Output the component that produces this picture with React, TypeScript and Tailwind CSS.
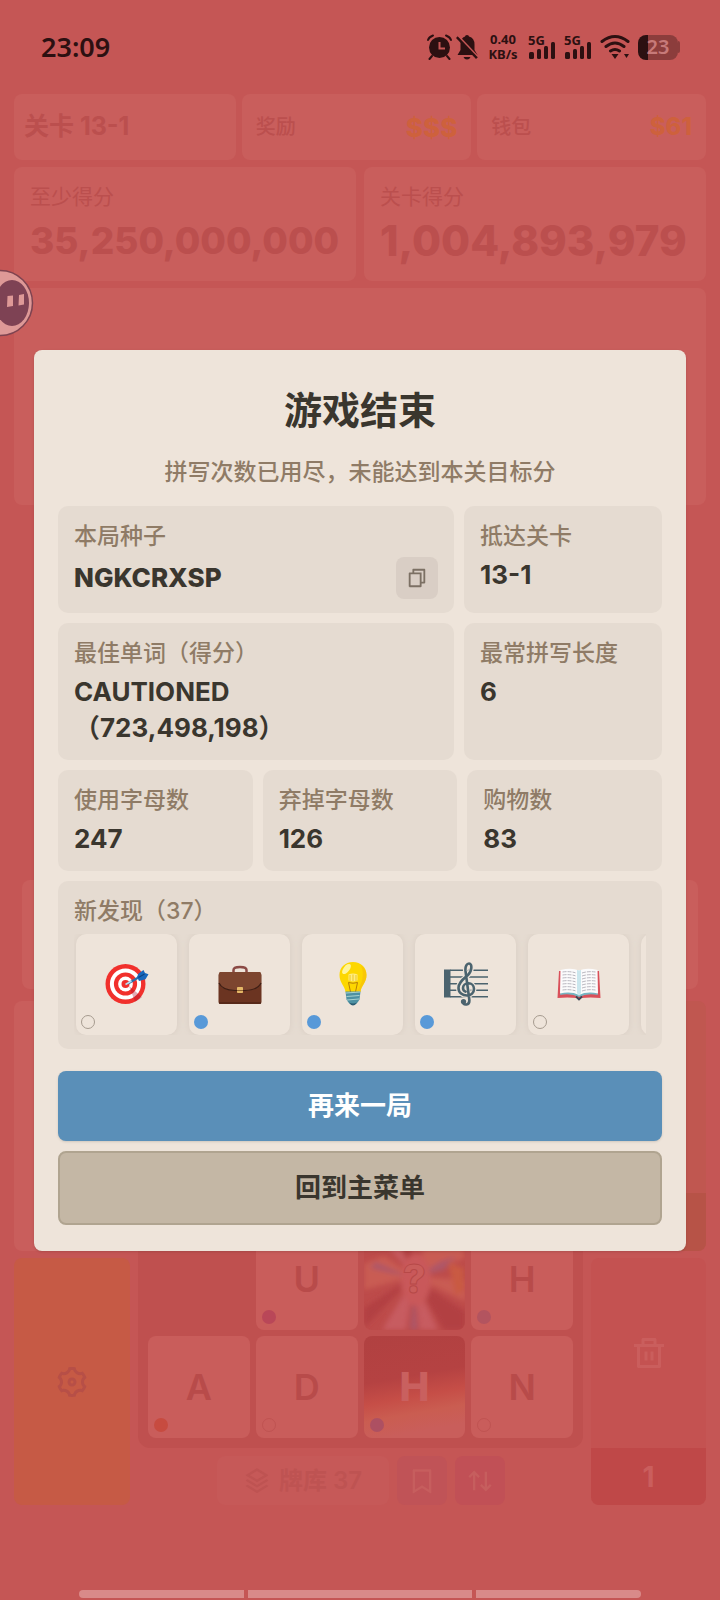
import type { ReactNode } from 'react'
import {
    RiArrowUpDownLine,
    RiBookmarkLine,
    RiDeleteBinLine,
    RiFileCopyLine,
    RiSettings3Line,
    RiStackLine,
} from 'react-icons/ri'

interface Discovery {
    name: string;
    owned: boolean;
    art: ReactNode;
}

interface Letter {
    char: string;
    dot: string;
    look?: 'burst' | 'flame';
}

const TargetArt = () => (
    <svg viewBox="0 0 44 44" className="size-11" aria-hidden="true">
        <circle cx="20.5" cy="22" r="20" fill="#f1302c" />
        <circle cx="20.5" cy="22" r="15.6" fill="#fff" />
        <circle cx="20.5" cy="22" r="11.6" fill="#f1302c" />
        <circle cx="20.5" cy="22" r="7.4" fill="#fff" />
        <circle cx="20.5" cy="22" r="4" fill="#f1302c" />
        <path d="M24 24 37 35a20 20 0 0 1-7 4.500Z" fill="#a5122c" opacity=".35" />
        <path d="M23 21.500 36 14" stroke="#2d6fa8" strokeWidth="2.200" />
        <path d="m20.500 22.500 6-3.500" stroke="#b8dff0" strokeWidth="1.600" />
        <path d="m32 15 1.500-3.500 5-3.500 1.500 3 3.500 1.200-3 5-6.500 1.800Z" fill="#1767bd" />
        <path d="m33.500 15.500 6-3.500" stroke="#0d4381" strokeWidth="1.200" />
    </svg>
)

const BriefcaseArt = () => (
    <svg viewBox="0 0 44 44" className="size-11" aria-hidden="true">
        <path d="M15.500 10V8Q15.500 5 22 5t6.500 3v2" fill="none" stroke="#8b4a45" strokeWidth="2.500" />
        <rect x="0.500" y="11" width="43" height="31" rx="2" fill="#6b3421" />
        <path d="M2 10h40q1 0 1 2v10q-3 6-16 7H17Q4 28 1 22V12q0-2 1-2Z" fill="#7d452f" />
        <path d="M1 21q3 7 16 7.500h10Q40 28 43 21" fill="none" stroke="#3d1e15" strokeWidth="1.200" />
        <path d="M1 41h42" stroke="#502617" strokeWidth="1.500" />
        <rect x="19" y="25" width="6" height="6" rx=".8" fill="#e5b867" />
        <path d="M19 28.500h6" stroke="#8f6231" />
    </svg>
)

const BulbArt = () => (
    <svg viewBox="0 0 44 44" className="size-11" aria-hidden="true">
        <path d="M22 0c-8 0-13.500 5.500-13.500 13 0 8 5 10 6 17h15c1-7 6-9 6-17C35.500 5.500 30 0 22 0Z" fill="#fdd700" />
        <path d="M30 3.500c4 9 1 18-4 26h3.500c1-7 6-9 6-16.500C35.500 9 33.500 5.500 30 3.500Z" fill="#f6bd0c" opacity=".6" />
        <ellipse cx="15.500" cy="7" rx="3" ry="6" transform="rotate(38 15.500 7)" fill="#fff59a" />
        <path d="M17.500 12.500q4.500-2 9 0v6q-4.500 2-9 0Z" fill="#fff3a0" opacity=".8" />
        <path d="M19 13v6M22 12.500v6.500M25 13v6" stroke="#e9bb0a" strokeWidth=".8" />
        <path d="m19.500 30-2-9.500q4.500 1.500 9 0l-2 9.500" fill="none" stroke="#b77e09" />
        <path d="M14.500 29.500h15l-1 8q-3 5.500-6.500 5.500t-6.500-5.500Z" fill="#4d91a3" />
        <path d="m15 31 14-1M15.500 34.500l13-1M16 38l12-1" stroke="#a9d2cf" strokeWidth="1.200" />
        <path d="M18 40.500q4 2 8 0-2 3-4 3t-4-3Z" fill="#2a5c72" />
    </svg>
)

const clef =
    'M18.500 39.500c1 4.500 7.500 4 6.800-2L21.500 9C21 4 23 1.500 25 1.500c3.500 0 3 8-1 11.500-5 4.500-9.500 7.500-9.500 13 0 4.800 4 7.500 8.500 7.500 4.200 0 7-3 7-6.500 0-3.300-2.500-5.700-5.500-5.700-3.200 0-5.500 2.200-5.500 4.700 0 1.700 1 3 2.500 3.600'

const ScoreArt = () => (
    <svg viewBox="0 0 44 44" className="size-11" aria-hidden="true">
        <path d="M0 7.500h6.500v28H0z" fill="#4b636e" />
        <path d="M6 8.300h38M6 15h38M6 21.700h38M6 28.300h38M6 34.700h38" stroke="#4b636e" strokeWidth="1.500" />
        <path d={clef} fill="none" stroke="#eee4da" strokeWidth="5" />
        <path d={clef} fill="none" stroke="#4b636e" strokeWidth="2.600" strokeLinecap="round" />
        <circle cx="19.500" cy="39.500" r="2.600" fill="#4b636e" />
    </svg>
)

const bookLines = [11, 14, 17, 20, 23, 26, 29]

const BookArt = () => (
    <svg viewBox="0 0 44 44" className="size-11" aria-hidden="true">
        <path d="m2 9-1.500 27q10-1 19 0l2.500 1.500 2.500-1.500q9-1 19 0L42 9Z" fill="#d9505a" />
        <path d="M3 33q11-2 19 2 8-4 19-2l-1-3H4Z" fill="#76b4c1" />
        <path d="M3.500 8Q15 5.500 22 8.500V33Q14 29 3 31.500Z" fill="#fbfbfc" />
        <path d="M40.500 8Q29 5.500 22 8.500V33q8-4 19-1.500Z" fill="#fbfbfc" />
        <path d="M20 8q2 0 2 1 0-1 2-1v23l-2 3-2-3Z" fill="#cae6ed" />
        {bookLines.map((y) => (
            <path key={y} d={`M5.500 ${y - 1}q7-1 13 .8M25 ${y}q6-2 13.500-1`} fill="none" stroke="#a7a5ae" strokeWidth=".8" strokeDasharray="4 1" />
        ))}
        <path d="m19 34.500 3 3 3-3" fill="none" stroke="#3e4555" strokeWidth="1.800" />
    </svg>
)

const discoveries: Discovery[] = [
    { name: '靶心', owned: false, art: <TargetArt /> },
    { name: '公文包', owned: true, art: <BriefcaseArt /> },
    { name: '灯泡', owned: true, art: <BulbArt /> },
    { name: '乐谱', owned: true, art: <ScoreArt /> },
    { name: '书本', owned: false, art: <BookArt /> },
]

const letters: (Letter | null)[] = [
    null,
    { char: 'U', dot: 'bg-[#b94758]' },
    { char: '?', dot: '', look: 'burst' },
    { char: 'H', dot: 'bg-[#b3545f]' },
    { char: 'A', dot: 'bg-[#c74b40]' },
    { char: 'D', dot: 'border border-[#bf5352]' },
    { char: 'H', dot: 'bg-[#ad5062]', look: 'flame' },
    { char: 'N', dot: 'border border-[#bf5352]' },
]

const Signal = () => (
    <div className="flex h-6 w-7 flex-col justify-between">
        <span className="text-[13px] leading-[10px] font-bold">5G</span>
        <svg viewBox="0 0 28 17" className="-mt-1 h-[17px] w-7 fill-current" aria-hidden="true">
            <rect x="1" y="10" width="5" height="7" rx="1.500" />
            <rect x="9" y="7" width="4" height="10" rx="1.500" />
            <rect x="16" y="4" width="4" height="13" rx="1.500" />
            <rect x="23" y="0" width="4" height="17" rx="1.500" />
        </svg>
    </div>
)

const StatusBar = () => (
    <header className="flex h-[94px] shrink-0 items-center justify-between pr-[26px] pl-[27px] font-['Noto_Sans'] text-[#2c1011]">
        <time className="text-[27px] leading-9 font-semibold">23:09</time>
        <div className="flex items-center gap-2">
            <div className="flex items-center gap-1">
                <svg viewBox="0 0 25 26" className="h-[26px] w-[25px]" fill="none" stroke="currentColor" strokeWidth="2" aria-hidden="true">
                    <path d="M1 6q1-3 5-4.500M24 6q-1-3-5-4.500M5 22l-2.500 3M20 22l2.500 3" strokeLinecap="round" />
                    <circle cx="12.500" cy="13.500" r="10.500" fill="currentColor" stroke="none" />
                    <path d="M12.500 8v6.500H18" stroke="#c55655" />
                </svg>
                <svg viewBox="0 0 22 26" className="h-[26px] w-[22px] fill-current" aria-hidden="true">
                    <path d="M11 1q2 0 2 1.500 5.500 1.500 5.500 8V16l3 5h-20l3-5v-5.500Q4.500 4 9 2.500 9 1 11 1ZM7.500 23h7q-1 2.500-3.500 2.500T7.500 23Z" />
                    <path d="m0 4 2-2 20 21-2 2Z" />
                    <path d="m2 1.500 20 21" stroke="#c55655" strokeWidth="1.500" />
                </svg>
            </div>
            <div className="w-[34px] text-center text-[13px] leading-[15px] font-bold">
                <div>0.40</div>
                <div>KB/s</div>
            </div>
            <Signal />
            <Signal />
            <svg viewBox="0 0 30 26" className="h-[26px] w-[30px]" fill="none" stroke="currentColor" strokeWidth="3" strokeLinecap="round" aria-hidden="true">
                <path d="M2 7.500q13-10 26 0M6 12.500q9-7 18 0M10.500 17q4.500-3 9 0" />
                <path d="M11.500 20h7L15 25ZM24 20h5l-2.500 4Z" fill="currentColor" stroke="none" />
            </svg>
            <div className="flex items-center">
                <div className="flex h-[25px] w-10 items-center justify-center overflow-hidden rounded-lg bg-linear-to-r from-[#2c1011] from-25% to-[#8c3d3c] to-25% text-xl leading-6 font-semibold text-[#c77a79]">
                    23
                </div>
                <div className="h-3 w-[2px] rounded-r bg-[#8c3d3c]" />
            </div>
        </div>
    </header>
)

const Scoreboard = () => (
    <section className="flex shrink-0 flex-col gap-[7px] text-[#bb4f4e]">
        <div className="grid h-[66px] grid-cols-[222fr_230fr_229fr] gap-[6px] [&>div]:flex [&>div]:items-center [&>div]:justify-between [&>div]:rounded-lg [&>div]:bg-[#c95e5c]">
            <div className="px-[10px] text-[25px] font-bold">关卡 13-1</div>
            <div className="px-[14px]">
                <span className="text-xl font-medium">奖励</span>
                <span className="text-[26px] font-extrabold text-[#ce613c]">$$$</span>
            </div>
            <div className="px-[14px]">
                <span className="text-xl font-medium">钱包</span>
                <span className="text-2xl font-extrabold text-[#ce613c]">$61</span>
            </div>
        </div>
        <div className="grid h-[114px] grid-cols-2 gap-2 [&>div]:rounded-lg [&>div]:bg-[#c95e5c] [&>div]:px-4 [&>div]:pt-4">
            <div>
                <div className="text-[21px] leading-7">至少得分</div>
                <div className="text-[37px] leading-[60px] font-extrabold">35,250,000,000</div>
            </div>
            <div>
                <div className="text-[21px] leading-7">关卡得分</div>
                <div className="text-[42px] leading-[60px] font-extrabold">1,004,893,979</div>
            </div>
        </div>
        <div className="h-[217px] rounded-lg bg-[#c95e5c]" />
    </section>
)

const tileLooks = {
    plain: 'bg-[#c95d5b] text-[#b84b4a] font-semibold text-[36px]',
    burst: 'bg-[#bd4b4a] text-[#c95d5b] font-extrabold text-[40px] [-webkit-text-stroke:1px_#b74948]',
    flame: 'bg-[linear-gradient(170deg,#b14141_0%,#b54242_40%,#c64e47_58%,#ca5d51_72%,#c95e5b_88%)] text-[#c9605f] font-extrabold text-[40px]',
}

const Burst = () => (
    <svg viewBox="0 0 102 102" className="absolute inset-0 size-full" aria-hidden="true">
        <filter id="soft">
            <feGaussianBlur stdDeviation="2.500" />
        </filter>
        <g filter="url(#soft)">
            <path d="M50 48 0 62v-26l20-8ZM50 48 68 0h24l10 30ZM50 48l52 4v22Z" fill="#c95c52" />
            <path d="m50 50-32 52h24ZM50 50l6 52h18ZM50 48 8 0h18Z" fill="#c75b60" />
            <path d="m50 48-50 32v20ZM50 50l52 34v18H80ZM50 48 30 0h16Z" fill="#b24043" />
            <path d="m50 60-4 42h8ZM50 50 76 34l16-6-12 14ZM48 50 12 34l-6 6Z" fill="#ae5768" />
            <path d="m84 34 16 6v22l-8 6Z" fill="#c95a42" />
            <ellipse cx="52" cy="52" rx="15" ry="26" fill="#c9595a" />
        </g>
    </svg>
)

const LetterTile = ({ letter }: { letter: Letter }) => (
    <div className={`relative flex h-[102px] items-center justify-center overflow-hidden rounded-lg ${tileLooks[letter.look ?? 'plain']}`}>
        {letter.look === 'burst' && <Burst />}
        <span className="relative">{letter.char}</span>
        <span className={`absolute bottom-[6px] left-[6px] size-[14px] rounded-full ${letter.dot}`} />
    </div>
)

const Board = () => (
    <section className="flex shrink-0 gap-2">
        <div className="flex w-[116px] flex-col gap-[7px]">
            <div className="h-[250px] rounded-lg bg-[#c95e5c]" />
            <button type="button" aria-label="设置" className="flex h-[247px] items-center justify-center rounded-lg bg-[#c65a45] text-[#b74f47]">
                <RiSettings3Line className="size-9" />
            </button>
        </div>
        <div className="flex flex-1 flex-col justify-end gap-2">
            <div className="grid grid-cols-4 gap-[6px] rounded-xl bg-[#bf504f] px-[10px] pt-3 pb-[10px]">
                {letters.map((letter, i) => (letter ? <LetterTile key={i} letter={letter} /> : <div key={i} />))}
            </div>
            <div className="flex h-[49px] justify-center gap-2">
                <button type="button" className="flex w-[172px] items-center justify-center gap-2 rounded-lg bg-[#c65958] text-2xl font-semibold text-[#be5352]">
                    <RiStackLine className="size-7" />
                    牌库 37
                </button>
                <button type="button" aria-label="书签" className="flex w-[50px] items-center justify-center rounded-lg bg-[#c05357] text-[#c65e5e]">
                    <RiBookmarkLine className="size-7" />
                </button>
                <button type="button" aria-label="排序" className="flex w-[50px] items-center justify-center rounded-lg bg-[#c15056] text-[#c65e5e]">
                    <RiArrowUpDownLine className="size-7" />
                </button>
            </div>
        </div>
        <div className="flex w-[115px] flex-col gap-[7px]">
            <div className="flex h-[250px] flex-col justify-end rounded-lg bg-[#c05750]">
                <div className="h-[58px] rounded-b-lg bg-[#b75347]" />
            </div>
            <button type="button" aria-label="丢弃" className="flex h-[247px] flex-col overflow-hidden rounded-lg bg-[#c45251] text-[#ca5e5d]">
                <span className="flex w-full flex-1 items-center justify-center">
                    <RiDeleteBinLine className="size-9" />
                </span>
                <span className="flex h-[57px] w-full items-center justify-center bg-[#bf4848] text-[28px] font-bold">1</span>
            </button>
        </div>
    </section>
)

const Stat = ({ label, value }: { label: string; value: ReactNode }) => (
    <div className="rounded-[10px] bg-[#e5dbd1] px-4 py-[14px]">
        <dt className="text-[23px] leading-8 font-medium text-[#8f7b66]">{label}</dt>
        <dd className="mt-[5px] text-[26px] leading-9 font-bold">{value}</dd>
    </div>
)

const GameOver = () => (
    <div role="dialog" aria-labelledby="over" className="w-full rounded-lg bg-[#eee4da] px-6 pt-9 pb-[26px] text-[#3a362e] shadow">
        <h1 id="over" className="text-center text-[38px] leading-[48px] font-bold">游戏结束</h1>
        <p className="mt-5 text-center text-[23px] leading-9 font-medium text-[#8f7b66]">拼写次数已用尽，未能达到本关目标分</p>
        <dl className="mt-4 grid grid-cols-[2fr_1fr] gap-[10px]">
            <Stat
                label="本局种子"
                value={
                    <div className="flex items-center justify-between font-extrabold">
                        NGKCRXSP
                        <button type="button" aria-label="复制种子" className="flex size-[42px] items-center justify-center rounded-lg bg-[#d9cec5] text-[#7c7064]">
                            <RiFileCopyLine className="size-[22px]" />
                        </button>
                    </div>
                }
            />
            <Stat label="抵达关卡" value="13-1" />
            <Stat label="最佳单词（得分）" value={<>CAUTIONED<br />（723,498,198）</>} />
            <Stat label="最常拼写长度" value="6" />
        </dl>
        <dl className="mt-[10px] grid grid-cols-3 gap-[10px]">
            <Stat label="使用字母数" value="247" />
            <Stat label="弃掉字母数" value="126" />
            <Stat label="购物数" value="83" />
        </dl>
        <section className="mt-[10px] rounded-[10px] bg-[#e5dbd1] px-4 py-[14px]">
            <h2 className="text-[23px] leading-8 font-medium text-[#8f7b66]">新发现（37）</h2>
            <ul className="mt-[7px] flex gap-3 overflow-hidden pl-[2px]">
                {discoveries.map((item) => (
                    <li key={item.name} className="relative flex size-[101px] shrink-0 items-center justify-center rounded-[10px] bg-[#eee4da] shadow-[0_0_6px_#d8cdc3]">
                        {item.art}
                        <span className={`absolute bottom-[6px] left-[5px] size-[14px] rounded-full ${item.owned ? 'bg-[#5899d8]' : 'border border-[#a69b8f]'}`} />
                    </li>
                ))}
                <li className="size-[101px] shrink-0 rounded-[10px] bg-[#eee4da] shadow-[0_0_6px_#d8cdc3]" />
            </ul>
        </section>
        <div className="mt-[22px] flex flex-col gap-[10px] text-[26px] font-bold">
            <button type="button" className="h-[70px] rounded-lg bg-[#5a8fb8] text-white shadow-sm">再来一局</button>
            <button type="button" className="h-[74px] rounded-lg border-2 border-[#b0a490] bg-[#c4b7a5]">回到主菜单</button>
        </div>
    </div>
)

const App = () => {
    return (
        <div className="relative flex min-h-screen flex-col bg-[#c55655] px-[14px] font-[Inter,'Noto_Sans_CJK_SC',sans-serif]">
            <StatusBar />
            <Scoreboard />
            <div className="flex flex-1 flex-col justify-end px-2 pt-6 pb-3">
                <div className="h-[109px] rounded-lg bg-[#c95e5c]" />
            </div>
            <Board />
            <footer className="flex h-[95px] shrink-0 items-end gap-1 px-[65px] pb-[2px]">
                <div className="h-2 flex-[165] rounded-l bg-[#d98a89]" />
                <div className="h-2 flex-[225] bg-[#d98a89]" />
                <div className="h-2 flex-[165] rounded-r bg-[#d98a89]" />
            </footer>
            <div className="absolute inset-0 flex items-center justify-center px-[34px]">
                <GameOver />
            </div>
            {/* floating assistant, half tucked behind the left edge */}
            <svg viewBox="0 0 36 68" className="absolute top-[269px] left-0 h-[68px] w-9" aria-hidden="true">
                <circle cx="0" cy="34" r="32.500" fill="#de9997" stroke="#7e4350" strokeWidth="1.500" />
                <ellipse cx="12" cy="34" rx="17" ry="23" fill="#7e4254" />
                <path d="m7.500 27 5.500-.5v10.500l-6 1ZM19 26l5-1v10.500l-5.500 1Z" fill="#de9997" />
            </svg>
        </div>
    )
}

export default App
